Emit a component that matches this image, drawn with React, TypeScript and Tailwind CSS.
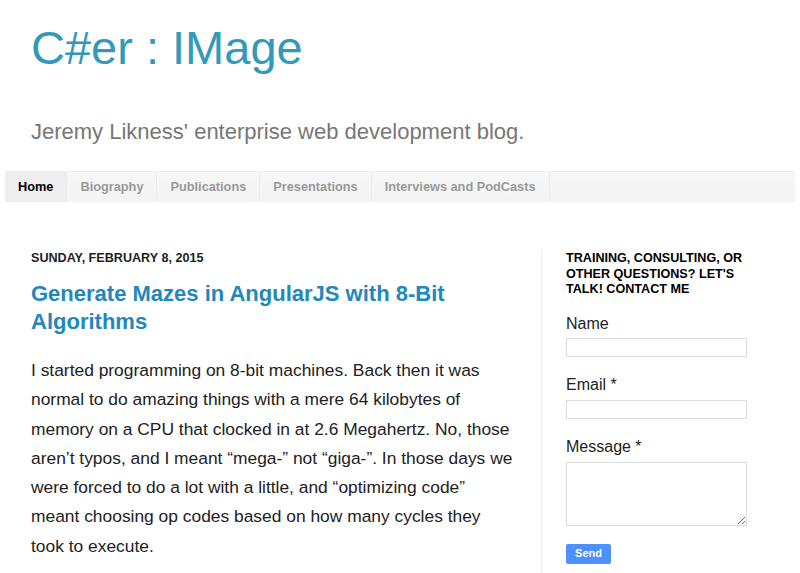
export default function App() {
  const tabs = ['Home', 'Biography', 'Publications', 'Presentations', 'Interviews and PodCasts']

  return (
    <div className="w-[800px] h-[573px] overflow-hidden bg-white font-['Liberation_Sans',Arial,sans-serif]">
      {/* Header */}
      <header className="pl-[31px] pt-[18px]">
        <h1 className="text-[47px] leading-[60px] text-[#3399bb]">C#er : IMage</h1>
        <p className="mt-[41px] text-[22px] leading-[26px] text-[#777]">
          Jeremy Likness' enterprise web development blog.
        </p>
      </header>

      {/* Tabs */}
      <nav className="mx-[5px] mt-[26px] flex h-[31px] border-t border-[#eee] bg-gradient-to-b from-[#f8f8f8] to-[#f3f3f3]">
        {tabs.map((t, i) => (
          <a
            key={t}
            className={`flex items-center px-[13px] text-[12.75px] font-bold border-r border-[#ececec] ${
              i === 0 ? 'bg-[#eee] text-black' : 'text-[#999]'
            }`}
          >
            {t}
          </a>
        ))}
      </nav>

      <div className="flex">
        {/* Main column */}
        <main className="w-[541px] pl-[31px] pr-[24px] pt-[49px]">
          <h2 className="text-[12.6px] leading-[15px] font-bold text-[#222] uppercase">
            Sunday, February 8, 2015
          </h2>
          <h3 className="mt-[14px] text-[22px] leading-[28px] font-bold text-[#2288bb]">
            Generate Mazes in AngularJS with 8-Bit Algorithms
          </h3>
          <p className="mt-[20px] text-[17.4px] leading-[29.3px] text-[#222]">
            I started programming on 8-bit machines. Back then it was normal to do amazing things
            with a mere 64 kilobytes of memory on a CPU that clocked in at 2.6 Megahertz. No, those
            aren’t typos, and I meant “mega-” not “giga-”. In those days we were forced to do a lot
            with a little, and “optimizing code” meant choosing op codes based on how many cycles
            they took to execute.
          </p>
        </main>

        {/* Sidebar */}
        <aside className="mt-[48px] border-l border-[#eee] pl-[24px] pt-[1px] h-[400px]">
          <h2 className="w-[185px] text-[12.6px] leading-[15.5px] font-bold text-black uppercase">
            Training, Consulting, or Other Questions? Let's Talk! Contact Me
          </h2>
          <form className="mt-[16px] text-[16px] text-[#222]">
            <label className="block leading-[20px]">Name</label>
            <input className="mt-[4px] block h-[19px] w-[181px] border border-[#ddd] outline-none" />
            <label className="mt-[18px] block leading-[20px]">Email *</label>
            <input className="mt-[5px] block h-[19px] w-[181px] border border-[#ddd] outline-none" />
            <label className="mt-[18px] block leading-[20px]">Message *</label>
            <textarea className="mt-[5px] block h-[64px] w-[181px] border border-[#ddd] outline-none" />
            <button
              type="button"
              className="mt-[18px] h-[20px] w-[45px] rounded-[2px] bg-[#4d90fe] text-[11px] font-bold text-white"
            >
              Send
            </button>
          </form>
        </aside>
      </div>
    </div>
  )
}
